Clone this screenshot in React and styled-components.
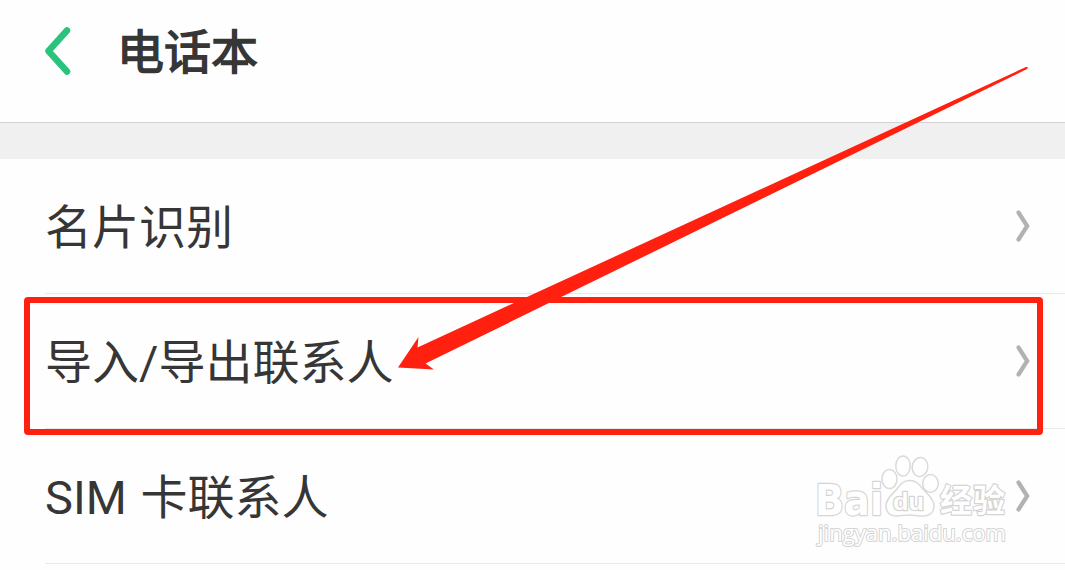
import React from "react";
import styled, { createGlobalStyle } from "styled-components";

const colors = {
  text: "#363636",
  accent: "#2ac37c",
  chevron: "#b2b2b2",
  line: "#e9e9e9",
  mark: "#ff2010",
};

const GlobalStyle = createGlobalStyle`
  * {
    box-sizing: border-box;
  }

  body {
    margin: 0;
    background: #fefefe;
    overflow: hidden;
  }
`;

const Screen = styled.main`
  position: relative;
  width: 1065px;
  height: 570px;
  overflow: hidden;
  background: #fefefe;
  color: ${colors.text};
  font-family: Roboto, "Noto Sans CJK SC", sans-serif;
`;

const Header = styled.header`
  display: flex;
  align-items: center;
  height: 123px;
  padding: 0 44px 20px;
  border-bottom: 1px solid #d2d2d2;
`;

const BackButton = styled.button`
  display: flex;
  width: 28px;
  height: 50px;
  margin-right: 45px;
  padding: 0;
  border: none;
  background: none;
`;

const Title = styled.h1`
  margin: 0;
  padding-top: 3px;
  font-size: 47px;
  font-weight: 400;
  line-height: 60px;
  -webkit-text-stroke: 1.5px ${colors.text};
`;

const Spacer = styled.div`
  height: 36px;
  background: #f0f0f0;
`;

const List = styled.ul`
  margin: 0;
  padding: 0 0 0 45px;
  list-style: none;
`;

const Row = styled.li`
  display: flex;
  align-items: center;
  justify-content: space-between;
  height: 135px;
  padding-right: 35px;
  border-bottom: 1px solid ${colors.line};
`;

const Label = styled.span`
  padding-top: 3px;
  font-size: 47px;
  line-height: 60px;
  word-spacing: 2px;
`;

const Highlight = styled.div`
  position: absolute;
  left: 24px;
  top: 297px;
  width: 1019px;
  height: 138px;
  border: 6px solid ${colors.mark};
  border-radius: 4px;
`;

const Overlay = styled.svg`
  position: absolute;
  left: 0;
  top: 0;
  pointer-events: none;
`;

const OutlinedText = styled.text`
  fill: #fff;
  stroke: #d4d4d4;
  stroke-width: ${(props) => props.$weight}px;
  stroke-linejoin: round;
  paint-order: stroke;
  font-family: ${(props) => props.$font}, sans-serif;
  font-size: ${(props) => props.$size}px;
  font-weight: ${(props) => (props.$bold ? 700 : 400)};
`;

const items = [
  { id: "card", label: "名片识别" },
  { id: "transfer", label: "导入/导出联系人" },
  { id: "sim", label: "SIM 卡联系人" },
];

const Chevron = () => (
  <svg width="14" height="32" viewBox="0 0 14 32" fill="none">
    <path d="M2.5 2.5 L11.2 16 L2.5 29.5" stroke={colors.chevron} strokeWidth="4.2" strokeLinecap="round" />
  </svg>
);

const Watermark = () => (
  <g>
    <OutlinedText x="815" y="515" textLength="68" lengthAdjust="spacingAndGlyphs" $font="DejaVu Sans" $size={43} $weight={2.4} $bold>
      Bai
    </OutlinedText>
    <g fill="#fff" stroke="#dadada" strokeWidth="1.5">
      <ellipse cx="889.5" cy="479" rx="7.5" ry="9.5" />
      <ellipse cx="903" cy="466" rx="7.2" ry="10" />
      <ellipse cx="920" cy="467" rx="7.8" ry="9.5" transform="rotate(8 920 467)" />
      <ellipse cx="930.5" cy="483.5" rx="7.8" ry="9" />
      <path d="M909.5 480.5 C903 480.5 900 485 897 489 C893 494 886 498 886 506 C886 512 890 516.5 897 516 C903 515.5 906 515 910 515 C914 515 918 516 923 516 C930 516 934 512 934 506 C934 498 926 493 922 488 C919 484 916 480.5 909.5 480.5 Z" />
    </g>
    <OutlinedText x="893" y="510" textLength="31" lengthAdjust="spacingAndGlyphs" $font="Liberation Sans" $size={24} $weight={2.4} $bold>
      du
    </OutlinedText>
    <OutlinedText x="940" y="512" textLength="65" $font="Noto Sans CJK SC" $size={32} $weight={2.4} $bold>
      经验
    </OutlinedText>
    <OutlinedText x="818" y="541" textLength="188" lengthAdjust="spacingAndGlyphs" $font="Open Sans" $size={22} $weight={2}>
      jingyan.baidu.com
    </OutlinedText>
  </g>
);

const App = () => {
  return (
    <>
      <GlobalStyle />
      <Screen>
        <Header>
          <BackButton aria-label="返回">
            <svg width="28" height="50" viewBox="0 0 28 50" fill="none">
              <path d="M23 4.5 L4.5 25 L23 45.5" stroke={colors.accent} strokeWidth="6.5" strokeLinecap="round" strokeLinejoin="round" />
            </svg>
          </BackButton>
          <Title>电话本</Title>
        </Header>
        <Spacer />
        <List>
          {items.map((item) => (
            <Row key={item.id}>
              <Label>{item.label}</Label>
              <Chevron />
            </Row>
          ))}
        </List>
        <Highlight />
        <Overlay width="1065" height="570" viewBox="0 0 1065 570">
          <polygon points="398,367.5 418.5,337 417.5,347.5 1026,67 1028,67 1027,69 425.5,363.5 434,369.5" fill={colors.mark} />
          <Watermark />
        </Overlay>
      </Screen>
    </>
  );
};

export default App;
